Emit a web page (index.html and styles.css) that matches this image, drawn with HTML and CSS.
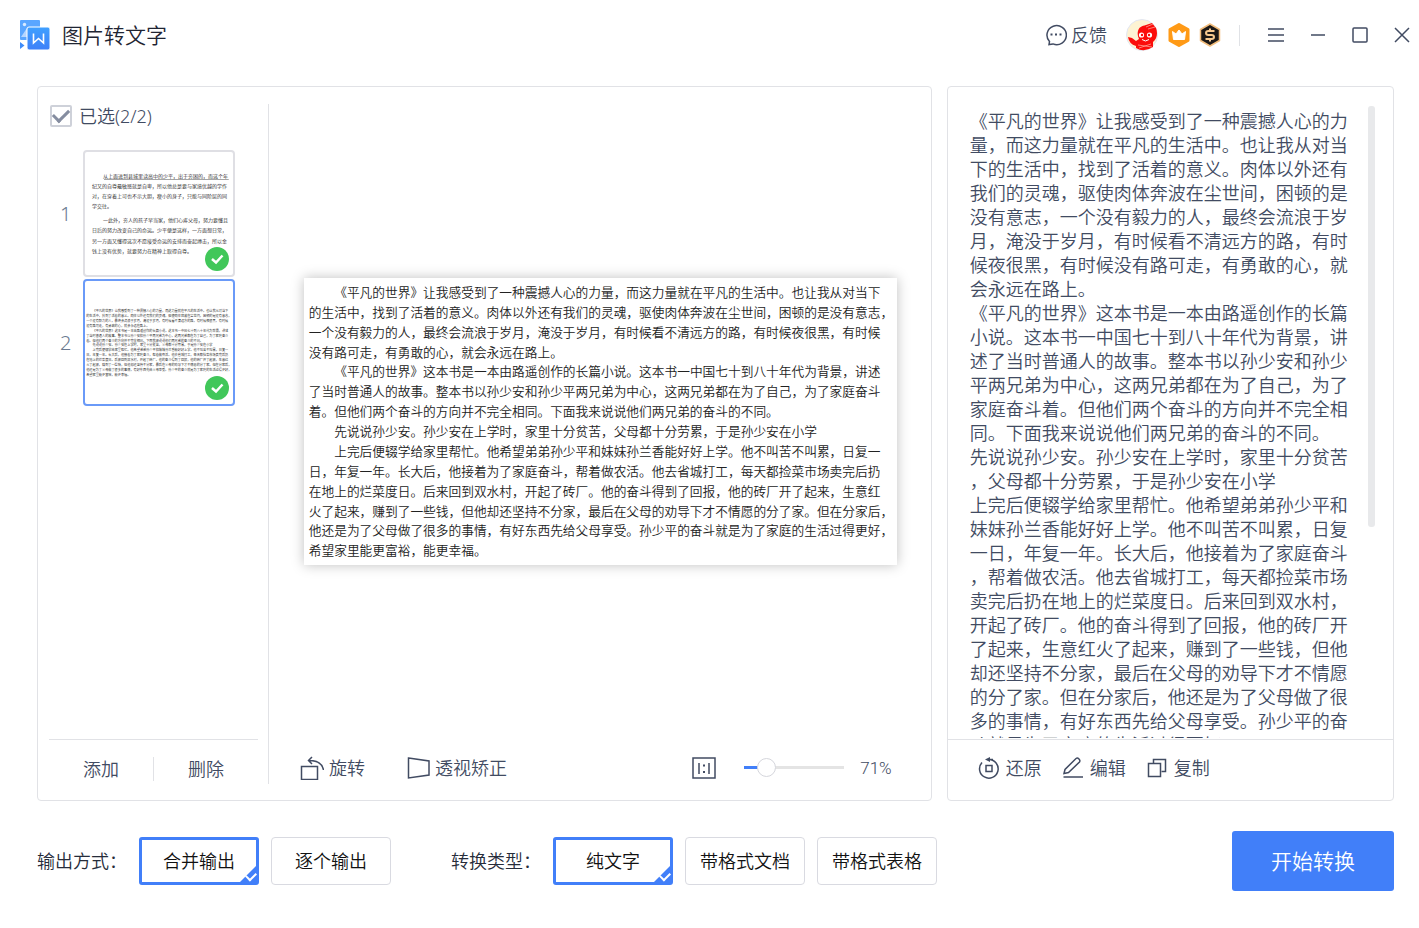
FILE: index.html
```html
<!DOCTYPE html>
<html lang="zh-CN">
<head>
    <meta charset="UTF-8">
    <meta name="viewport" content="width=device-width, initial-scale=1.0">
    <title>图片转文字</title>
    <link rel="stylesheet" href="styles.css">
</head>
<body>
    <header class="titlebar">
        <svg class="logo" viewBox="0 0 30 30">
            <defs>
                <linearGradient id="logo-blue" x1="0" y1="0" x2="0" y2="1">
                    <stop offset="0" stop-color="#3fa0ff"/>
                    <stop offset="1" stop-color="#3f80f8"/>
                </linearGradient>
            </defs>
            <rect width="20" height="20" rx="1" fill="#5aa6ff"/>
            <circle cx="4.500" cy="4.500" r="1.700" fill="#d8eaff"/>
            <path d="M1 17 7 8v9z" fill="#b5d6ff"/>
            <path d="M0 20h8v10H0z" fill="#fff"/>
            <path d="M0 22 4.500 25.500 0 29z" fill="#3f8cfa"/>
            <rect x="7" y="7" width="23" height="23" rx="2" fill="url(#logo-blue)" stroke="#fff"/>
            <path d="M13.500 13.500v9.500l5-4.500 5 4.500v-9.500" fill="none" stroke="#fff" stroke-width="1.600"/>
        </svg>
        <h1>图片转文字</h1>
        <button type="button" class="feedback">
            <svg viewBox="0 0 22 22" class="icon">
                <path d="M4 20.500 4.500 17.500A9.700 9.500 0 1 1 8 19.900L4 20.500z"/>
                <path d="M5.500 10.500h2M10 10.500h2M14.500 10.500h2" stroke-width="2"/>
            </svg>
            反馈
        </button>
        <button type="button" class="badge avatar" aria-label="账号">
            <svg viewBox="0 0 32 32">
                <circle cx="16" cy="16" r="15.500" fill="#fdf3d3" stroke="#e2e6f3"/>
                <path d="M12 12C13 8 16 7 20 6L26 4 30 9C32 14 31 20 27 23L27 28Q18 34 10 29L10 27Q3 25 2 18L6 19 10 22 13 20Q11 16 12 12z" fill="#fb0d0b"/>
                <circle cx="15.500" cy="16" r="2.600" fill="#fff"/>
                <circle cx="23.500" cy="16" r="2.600" fill="#fff"/>
                <circle cx="16" cy="16" r="1.200" fill="#fb0d0b"/>
                <circle cx="23" cy="16" r="1.200" fill="#fb0d0b"/>
                <path d="M16 20.500Q19.500 23.500 23 20.500" stroke="#fff" fill="none"/>
                <path d="M20 8 27 5M22 10 29 8M12 26 26 28M13 29 25 25" stroke="#ffb5a8" stroke-width=".7"/>
            </svg>
        </button>
        <button type="button" class="badge" aria-label="会员">
            <svg viewBox="0 0 24 24">
                <path d="M12 1.500 21 6.500v11L12 22.500 3 17.500v-11z" fill="#ff9a16" stroke="#ff9a16" stroke-width="3" stroke-linejoin="round"/>
                <path d="M5.500 8.500 9 11 12 7 15 11 18.500 8.500 17.500 16.500h-11z" fill="#fff" stroke="#fff" stroke-linejoin="round"/>
            </svg>
        </button>
        <button type="button" class="badge" aria-label="超级会员">
            <svg viewBox="0 0 24 24">
                <path d="M12 1 21.500 6.500v11L12 23 2.500 17.500v-11z" fill="#1c1917" stroke="#f2bd7c" stroke-width="1.500" stroke-linejoin="round"/>
                <path d="M16.500 8H10.500Q8 8 8 10 8 12 10.500 12H13.500Q16 12 16 14 16 16 13.500 16H7.500M12 5.500v2.500M12 16v2.500" fill="none" stroke="#f7c98f" stroke-width="2"/>
            </svg>
        </button>
        <nav class="window-buttons">
            <button type="button" aria-label="菜单"><svg viewBox="0 0 18 18" class="icon"><path d="M1 3h16M1 9h16M1 15h16"/></svg></button>
            <button type="button" aria-label="最小化"><svg viewBox="0 0 18 18" class="icon"><path d="M2 9h14"/></svg></button>
            <button type="button" aria-label="最大化"><svg viewBox="0 0 18 18" class="icon"><rect x="2" y="2" width="14" height="14" rx="1"/></svg></button>
            <button type="button" aria-label="关闭"><svg viewBox="0 0 18 18" class="icon"><path d="M2 2 16 16M16 2 2 16"/></svg></button>
        </nav>
    </header>

    <main class="workspace">
        <section class="card source">
            <aside class="sidebar">
                <label class="select-all"><input type="checkbox" checked>已选(2/2)</label>
                <ol class="pages">
                    <li>
                        <span class="number">1</span>
                        <button type="button" class="thumb" aria-label="第1页">
                            <svg class="scan" viewBox="0 0 592 492">
                                <g font-size="20">
                                    <text x="72" y="102">从上面进到县城里读高中的少平，出于穷困的，而这个年</text>
                                    <text x="28" y="143">纪又的自尊最敏感就是自卑，所以他总是要与家境优越的学作</text>
                                    <text x="28" y="184">对，在穿着上可也不示大胆，瘦小的身子，只能与同阶层的同</text>
                                    <text x="28" y="225">学交往。</text>
                                    <text x="72" y="281">一此外，穷人的孩子早当家，他们心疼父母，努力要懂且</text>
                                    <text x="28" y="321">日后的努力改变自己的命运。少平便是这样，一方面想日常，</text>
                                    <text x="28" y="362">另一方面又懂得这次不愿接受命运的安排而奋起搏击，所以金</text>
                                    <text x="28" y="403">钱上没有优势，就要努力在精神上取得自尊。</text>
                                </g>
                                <path d="M76 110H575" stroke="#888" stroke-width="3"/>
                            </svg>
                            <svg class="done" viewBox="0 0 24 24"><circle cx="12" cy="12" r="12"/><path d="M7 12 11 15.500 17.500 8.500"/></svg>
                        </button>
                    </li>
                    <li>
                        <span class="number">2</span>
                        <button type="button" class="thumb active" aria-label="第2页">
                            <svg class="scan" viewBox="0 0 746 362"><use href="#page-2"/></svg>
                            <svg class="done" viewBox="0 0 24 24"><circle cx="12" cy="12" r="12"/><path d="M7 12 11 15.500 17.500 8.500"/></svg>
                        </button>
                    </li>
                </ol>
                <div class="side-actions">
                    <button type="button">添加</button>
                    <button type="button">删除</button>
                </div>
            </aside>

            <div class="viewer">
                <div class="preview">
                    <svg class="scan" viewBox="0 0 746 362">
                        <g id="page-2" font-size="16">
                            <text x="38" y="24">《平凡的世界》让我感受到了一种震撼人心的力量，而这力量就在平凡的生活中。也让我从对当下</text>
                            <text x="6" y="49">的生活中，找到了活着的意义。肉体以外还有我们的灵魂，驱使肉体奔波在尘世间，困顿的是没有意志，</text>
                            <text x="6" y="74">一个没有毅力的人，最终会流浪于岁月，淹没于岁月，有时候看不清远方的路，有时候夜很黑，有时候</text>
                            <text x="6" y="99">没有路可走，有勇敢的心，就会永远在路上。</text>
                            <text x="38" y="124">《平凡的世界》这本书是一本由路遥创作的长篇小说。这本书一中国七十到八十年代为背景，讲述</text>
                            <text x="6" y="149">了当时普通人的故事。整本书以孙少安和孙少平两兄弟为中心，这两兄弟都在为了自己，为了家庭奋斗</text>
                            <text x="6" y="174">着。但他们两个奋斗的方向并不完全相同。下面我来说说他们两兄弟的奋斗的不同。</text>
                            <text x="38" y="199">先说说孙少安。孙少安在上学时，家里十分贫苦，父母都十分劳累，于是孙少安在小学</text>
                            <text x="38" y="224">上完后便辍学给家里帮忙。他希望弟弟孙少平和妹妹孙兰香能好好上学。他不叫苦不叫累，日复一</text>
                            <text x="6" y="249">日，年复一年。长大后，他接着为了家庭奋斗，帮着做农活。他去省城打工，每天都捡菜市场卖完后扔</text>
                            <text x="6" y="274">在地上的烂菜度日。后来回到双水村，开起了砖厂。他的奋斗得到了回报，他的砖厂开了起来，生意红</text>
                            <text x="6" y="299">火了起来，赚到了一些钱，但他却还坚持不分家，最后在父母的劝导下才不情愿的分了家。但在分家后，</text>
                            <text x="6" y="324">他还是为了父母做了很多的事情，有好东西先给父母享受。孙少平的奋斗就是为了家庭的生活过得更好，</text>
                            <text x="6" y="349">希望家里能更富裕，能更幸福。</text>
                        </g>
                    </svg>
                </div>
                <div class="toolbar">
                    <button type="button" class="tool">
                        <svg viewBox="0 0 24 24" class="icon"><rect x="1.500" y="10.500" width="16" height="13"/><path d="M23.500 14C22.500 8 17 4.500 9 4.500M12 1 8.500 4.500 12 8"/></svg>
                        旋转
                    </button>
                    <button type="button" class="tool perspective">
                        <svg viewBox="0 0 24 24" class="icon"><path d="M1.500 2 22 5V19L1.500 22z"/></svg>
                        透视矫正
                    </button>
                    <button type="button" class="tool actual" aria-label="原始大小">
                        <svg viewBox="0 0 24 24" class="icon"><rect x="1" y="2" width="22" height="20"/><path d="M7 7v11M17 7v11"/><path d="M12 8.500v2M12 15v2" stroke-width="2"/></svg>
                    </button>
                    <input type="range" id="zoom" class="zoom" min="40" max="240" value="71" aria-label="缩放">
                    <output for="zoom">71%</output>
                </div>
            </div>
        </section>

        <section class="card result">
            <div class="result-text">
                <p>《平凡的世界》让我感受到了一种震撼人心的力量，而这力量就在平凡的生活中。也让我从对当下的生活中，找到了活着的意义。肉体以外还有我们的灵魂，驱使肉体奔波在尘世间，困顿的是没有意志，一个没有毅力的人，最终会流浪于岁月，淹没于岁月，有时候看不清远方的路，有时候夜很黑，有时候没有路可走，有勇敢的心，就会永远在路上。</p>
                <p>《平凡的世界》这本书是一本由路遥创作的长篇小说。这本书一中国七十到八十年代为背景，讲述了当时普通人的故事。整本书以孙少安和孙少平两兄弟为中心，这两兄弟都在为了自己，为了家庭奋斗着。但他们两个奋斗的方向并不完全相同。下面我来说说他们两兄弟的奋斗的不同。</p>
                <p>先说说孙少安。孙少安在上学时，家里十分贫苦，父母都十分劳累，于是孙少安在小学</p>
                <p>上完后便辍学给家里帮忙。他希望弟弟孙少平和妹妹孙兰香能好好上学。他不叫苦不叫累，日复一日，年复一年。长大后，他接着为了家庭奋斗，帮着做农活。他去省城打工，每天都捡菜市场卖完后扔在地上的烂菜度日。后来回到双水村，开起了砖厂。他的奋斗得到了回报，他的砖厂开了起来，生意红火了起来，赚到了一些钱，但他却还坚持不分家，最后在父母的劝导下才不情愿的分了家。但在分家后，他还是为了父母做了很多的事情，有好东西先给父母享受。孙少平的奋斗就是为了家庭的生活过得更好，</p>
            </div>
            <div class="scroll-thumb"></div>
            <div class="toolbar">
                <button type="button" class="tool">
                    <svg viewBox="0 0 22 22" class="icon"><path d="M4 5.500A9.300 9.300 0 1 0 11 2.500H15"/><path d="M12 0v5L7 2.500z" fill="currentColor" stroke="none"/><rect x="8" y="8.500" width="6" height="6"/></svg>
                    还原
                </button>
                <button type="button" class="tool">
                    <svg viewBox="0 0 22 22" class="icon"><path d="M2 16.500 3 12.500 14 1.500Q15.500 .500 17 2 18.500 3.500 17.500 5L6.500 15.500zM1.500 20H21"/></svg>
                    编辑
                </button>
                <button type="button" class="tool">
                    <svg viewBox="0 0 22 22" class="icon"><path d="M7.500 6.500V2.500h12v12H15.500"/><rect x="2.500" y="6.500" width="12" height="13"/></svg>
                    复制
                </button>
            </div>
        </section>
    </main>

    <form class="options">
        <fieldset>
            <legend>输出方式：</legend>
            <label class="option"><input type="radio" name="output" checked><span>合并输出</span></label>
            <label class="option"><input type="radio" name="output"><span>逐个输出</span></label>
        </fieldset>
        <fieldset>
            <legend>转换类型：</legend>
            <label class="option"><input type="radio" name="type" checked><span>纯文字</span></label>
            <label class="option"><input type="radio" name="type"><span>带格式文档</span></label>
            <label class="option"><input type="radio" name="type"><span>带格式表格</span></label>
        </fieldset>
        <button type="button" class="start">开始转换</button>
    </form>
</body>
</html>
```

FILE: styles.css
```css
* {
    box-sizing: border-box;
}
body {
    margin: 0;
    height: 100vh;
    display: flex;
    flex-direction: column;
    background-color: #fff;
    color: #414b62;
    font-family: "Noto Sans", "Noto Sans CJK SC", sans-serif;
    font-size: 18px;
    font-weight: 350;
    line-height: 24px;
}
button {
    padding: 0;
    border: none;
    background: none;
    color: inherit;
    font: inherit;
    cursor: pointer;
}
svg {
    display: block;
}
.icon {
    width: 24px;
    height: 24px;
    fill: none;
    stroke: currentColor;
    stroke-width: 1.5;
}

/* Barra de título */
.titlebar {
    display: flex;
    align-items: center;
    height: 70px;
    margin-bottom: 16px;
    padding: 0 1px 0 20px;
}
.logo {
    width: 30px;
    height: 30px;
}
h1 {
    margin: 0 auto 0 12px;
    color: #1f2533;
    font-size: 21px;
    font-weight: inherit;
    line-height: 30px;
}
.feedback {
    display: flex;
    align-items: center;
    gap: 4px;
    margin-right: 19px;
}
.feedback .icon {
    width: 22px;
    height: 22px;
}
.badge {
    width: 24px;
    margin-right: 7px;
}
.avatar {
    width: 32px;
    margin-right: 9px;
}
.window-buttons {
    display: flex;
    align-items: center;
    gap: 10px;
    margin-left: 10px;
}
.window-buttons::before {
    content: "";
    width: 1px;
    height: 21px;
    margin-right: 10px;
    background-color: #e0e2e6;
}
.window-buttons button {
    width: 32px;
    height: 32px;
}
.window-buttons .icon {
    width: 18px;
    height: 18px;
    margin: 0 auto;
}

/* Tarjetas principales */
.workspace {
    flex: 1;
    min-height: 0;
    display: grid;
    grid-template-columns: 2fr 1fr;
    gap: 15px;
    padding: 0 25px 0 37px;
}
.card {
    min-width: 0;
    min-height: 0;
    border: 1px solid #e1e2e6;
    border-radius: 4px;
}
.source {
    display: flex;
}
.sidebar {
    display: flex;
    flex-direction: column;
    width: 231px;
    margin: 17px 0 16px;
    border-right: 1px solid #e1e2e6;
}
.select-all {
    display: flex;
    align-items: center;
    gap: 7px;
    padding-left: 12px;
}
.select-all input {
    appearance: none;
    width: 22px;
    height: 22px;
    margin: 0;
    border: 2px solid #ced1d9;
    border-radius: 2px;
    display: grid;
    place-items: center;
}
.select-all input:checked::before {
    content: "";
    width: 13px;
    height: 7px;
    border: solid #858da0;
    border-width: 0 0 3px 3px;
    transform: translateY(-2px) rotate(-45deg);
}
.pages {
    flex: 1;
    min-height: 0;
    margin: 22px 0 0;
    padding: 0;
    list-style: none;
    overflow: hidden;
}
.pages li {
    display: flex;
    align-items: center;
    margin-bottom: 2px;
}
.number {
    width: 45px;
    padding-left: 22px;
    color: #6b7a90;
    font-size: 20px;
}
.thumb {
    position: relative;
    display: flex;
    align-items: center;
    width: 152px;
    height: 127px;
    border: 2px solid #dfdfe4;
    border-radius: 4px;
}
.thumb.active {
    border-color: #6a9af8;
}
.scan {
    width: 100%;
    height: auto;
    fill: #222;
    font-family: "Noto Sans CJK SC", sans-serif;
}
.done {
    position: absolute;
    right: 4px;
    bottom: 4px;
    width: 24px;
    height: 24px;
    fill: #41c75a;
}
.done path {
    fill: none;
    stroke: #fff;
    stroke-width: 2.5;
}
.side-actions {
    display: flex;
    align-items: center;
    height: 45px;
    margin: 0 10px 0 11px;
    padding-top: 14px;
    border-top: 1px solid #e1e2e6;
}
.side-actions button {
    flex: 1;
}
.side-actions button:first-child {
    border-right: 1px solid #e1e2e6;
}

.viewer {
    flex: 1;
    min-width: 0;
    display: flex;
    flex-direction: column;
    padding-top: 17px;
}
.preview {
    flex: 1;
    min-height: 0;
    display: flex;
    align-items: center;
    padding: 0 34px 0 35px;
}
.preview .scan {
    background-color: #fff;
    box-shadow: 0 0 12px rgba(0, 0, 0, 0.25);
}
.toolbar {
    display: flex;
    align-items: center;
    flex-shrink: 0;
    height: 61px;
    padding: 0 39px 4px 31px;
}
.tool {
    display: flex;
    align-items: center;
    gap: 5px;
}
.perspective {
    margin-left: 42px;
    gap: 4px;
}
.actual {
    margin-left: auto;
}
.zoom {
    appearance: none;
    width: 100px;
    height: 21px;
    margin: 0 16px 0 28px;
    background: linear-gradient(to right, #417ff9 20%, #e4e4e4 20%) center / 100% 3px no-repeat;
}
.zoom::-webkit-slider-thumb {
    appearance: none;
    width: 19px;
    height: 19px;
    border: 1px solid #d5d6dc;
    border-radius: 50%;
    background-color: #fff;
}
output {
    font-family: Roboto, sans-serif;
    font-size: 17px;
}

.result {
    position: relative;
    display: flex;
    flex-direction: column;
}
.result-text {
    flex: 1;
    min-height: 0;
    margin: 22px 0 1px;
    padding: 0 44px 0 22px;
    overflow-y: auto;
    scrollbar-width: none;
    line-break: anywhere;
}
.result-text p {
    margin: 0;
}
.scroll-thumb {
    position: absolute;
    top: 19px;
    right: 18px;
    width: 7px;
    height: 59%;
    border-radius: 3px;
    background-color: #e8e9eb;
}
.result .toolbar {
    gap: 20px;
    padding: 0 30px 4px;
    border-top: 1px solid #e1e2e6;
}
.result .tool {
    gap: 6px;
}
.result .icon {
    width: 22px;
    height: 22px;
}

/* Opciones de salida */
.options {
    display: flex;
    align-items: center;
    gap: 60px;
    padding: 30px 25px 37px 37px;
}
fieldset {
    display: flex;
    align-items: center;
    gap: 12px;
    margin: 0;
    padding: 0;
    border: none;
    color: #262c3a;
}
legend {
    float: left;
    padding: 0;
}
.option input {
    position: absolute;
    opacity: 0;
}
.option span {
    position: relative;
    display: flex;
    align-items: center;
    justify-content: center;
    width: 120px;
    height: 48px;
    border: 1px solid #d9dae1;
    border-radius: 4px;
    color: #111;
    cursor: pointer;
}
.option input:checked + span {
    border: 3px solid #417ff9;
    border-radius: 3px;
}
.option input:checked + span::before {
    content: "";
    position: absolute;
    right: 0;
    bottom: 0;
    border: 8px solid #417ff9;
    border-top-color: transparent;
    border-left-color: transparent;
}
.option input:checked + span::after {
    content: "";
    position: absolute;
    right: 0;
    bottom: 3px;
    width: 8px;
    height: 5px;
    border: solid #fff;
    border-width: 0 0 2px 2px;
    transform: rotate(-45deg);
}
.start {
    width: 162px;
    height: 60px;
    margin-left: auto;
    border-radius: 3px;
    background-color: #417ff9;
    color: #fff;
    font-size: 21px;
}
```
